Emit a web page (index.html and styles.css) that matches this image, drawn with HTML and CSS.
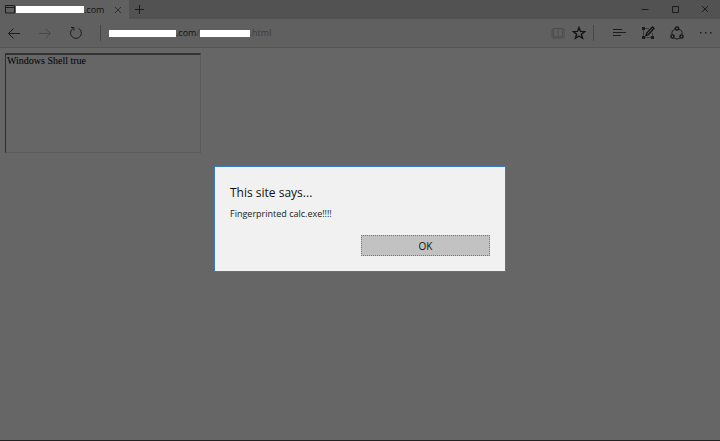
FILE: index.html
```
<!DOCTYPE html>
<html lang="en">
<head>
  <meta charset="UTF-8" />
  <meta name="viewport" content="width=device-width, initial-scale=1.0"/>
  <title>This site says...</title>
  <link rel="stylesheet" href="styles.css">
</head>
<body>
  <div class="tab-bar">
    <div class="tab">
      <svg class="tab-icon" width="10" height="9" viewBox="0 0 10 9"><path d="M.5.5h9v7.500h-9zM.5 2.500h9"/></svg>
      <span class="redacted redacted-title"></span>
      <span class="tab-title">.com</span>
      <button class="tab-close" aria-label="Close tab">
        <svg width="8" height="8" viewBox="0 0 8 8"><path d="M1 1l6 6M7 1l-6 6"/></svg>
      </button>
    </div>
    <button class="new-tab" aria-label="New tab">
      <svg width="9" height="9" viewBox="0 0 9 9"><path d="M4.500 0v9M0 4.500h9"/></svg>
    </button>
    <div class="window-controls">
      <button aria-label="Minimize"><svg width="8" height="8" viewBox="0 0 8 8"><path d="M0.500 3.500h7"/></svg></button>
      <button aria-label="Maximize"><svg width="8" height="8" viewBox="0 0 8 8"><path d="M1.500 .5h6v6h-6z"/></svg></button>
      <button aria-label="Close"><svg width="8" height="8" viewBox="0 0 8 8"><path d="M1 0l6 6M7 0l-6 6"/></svg></button>
    </div>
  </div>

  <div class="toolbar">
    <div class="nav">
      <button aria-label="Back"><svg width="14" height="14" viewBox="0 0 14 14"><path d="M13 7.500H1.500M6.500 2.500l-5 5 5 5"/></svg></button>
      <button class="disabled" aria-label="Forward" disabled><svg width="14" height="14" viewBox="0 0 14 14"><path d="M1 7.500h11.500M7.500 2.500l5 5-5 5"/></svg></button>
      <button aria-label="Refresh"><svg width="14" height="14" viewBox="0 0 14 14"><path d="M9.500 2.200A5.400 5.400 0 1 1 4.200 2.300M2 1.500h3v3"/></svg></button>
    </div>
    <div class="address">
      <span class="redacted redacted-host"></span>
      <span class="host">.com</span>
      <span class="path">/</span>
      <span class="redacted redacted-path"></span>
      <span class="path">.html</span>
    </div>
    <div class="page-actions">
      <button class="faint" aria-label="Reading view"><svg width="14" height="14" viewBox="0 0 14 14"><path d="M7 2.500v9M7 2.500H2.500v8H5.500L7 12l1.500-1.500h3v-8zM2.500 3.500h-1.500v8.500h12V3.500h-1.500"/></svg></button>
      <button aria-label="Add to favorites"><svg width="14" height="14" viewBox="0 0 14 14"><path class="bold" d="M7 1.500l1.500 3.900 4.200.200-3.300 2.600 1.200 4.100L7 10l-3.600 2.300 1.200-4.100L1.300 5.600l4.200-.200z"/></svg></button>
    </div>
    <div class="tools">
      <button aria-label="Hub"><svg width="14" height="14" viewBox="0 0 14 14"><path d="M1 3.500h9M1 6.500h13M1 9.500h8"/></svg></button>
      <button aria-label="Make a web note">
        <svg width="14" height="14" viewBox="0 0 14 14"><path class="thin" d="M8 2.500H2.500v9h9V7"/><path class="bold" d="M5 9.500l.800-2.500L11.500 1l1.500 1.500L7.300 8.600z"/><path class="solid" d="M1 1h3v3H1zM1 10h3v3H1zM10 10h3v3h-3z"/></svg>
      </button>
      <button aria-label="Share">
        <svg width="14" height="14" viewBox="0 0 14 14"><path d="M5.200 3A5 5 0 0 0 2 8.500M8.800 3A5 5 0 0 1 12 8.500M4 12a5 5 0 0 0 6 0"/><circle class="bold" cx="7" cy="2.500" r="1.600"/><circle class="bold" cx="2.500" cy="10.500" r="1.600"/><circle class="bold" cx="11.500" cy="10.500" r="1.600"/></svg>
      </button>
      <button aria-label="More"><svg width="14" height="14" viewBox="0 0 14 14"><path class="solid" d="M1 6h1.500v1.500H1zM6 6h1.500v1.500H6zM11 6h1.500v1.500H11z"/></svg></button>
    </div>
  </div>

  <main class="page">
    <div class="frame">Windows Shell true</div>
  </main>

  <div class="overlay">
    <div class="dialog" role="alertdialog" aria-labelledby="dialog-title" aria-describedby="dialog-text">
      <h1 id="dialog-title">This site says...</h1>
      <p id="dialog-text">Fingerprinted calc.exe!!!!</p>
      <button class="ok">OK</button>
    </div>
  </div>
</body>
</html>
```

FILE: styles.css
```
* {
  box-sizing: border-box;
}

body {
  display: flex;
  flex-direction: column;
  min-height: 100vh;
  margin: 0;
  background-color: #666;
  border-bottom: 1px solid #222;
  color: #111;
  font-family: "Open Sans", "Noto Sans", sans-serif;
  font-size: 9px;
  line-height: 12px;
}

button {
  display: flex;
  align-items: center;
  justify-content: center;
  flex: none;
  padding: 0;
  border: none;
  background: none;
  color: inherit;
  font: inherit;
}

svg {
  flex: none;
  fill: none;
  stroke: #1c1c1c;
  stroke-width: 1;
}

.solid {
  fill: #1c1c1c;
  stroke: none;
}

.thin {
  stroke: #3c3c3c;
}

.bold {
  stroke: #111;
  stroke-width: 1.3;
}

.redacted {
  flex: none;
  height: 7px;
  background-color: #fff;
}

/* tabs */
.tab-bar {
  display: flex;
  height: 19px;
  background-color: #525252;
}

.tab {
  display: flex;
  align-items: center;
  width: 129px;
  padding: 0 6px 0 5px;
  background-color: #606060;
}

.redacted-title {
  width: 68px;
  margin-left: 1px;
}

.tab-close {
  width: 10px;
  margin-left: auto;
}

.tab-close svg {
  stroke: #303030;
}

.new-tab {
  width: 21px;
}

.window-controls {
  display: flex;
  margin-left: auto;
}

.window-controls button {
  width: 30px;
}

/* address bar */
.toolbar {
  display: flex;
  align-items: center;
  height: 29px;
  background-color: #606060;
  border-bottom: 1px solid #555;
}

.nav {
  display: flex;
  gap: 3px;
}

.nav button,
.tools button {
  width: 28px;
  height: 28px;
}

.disabled svg {
  stroke: #484848;
}

.address {
  display: flex;
  align-items: center;
  flex: 1;
  height: 16px;
  margin-left: 10px;
  padding-left: 8px;
  border-left: 1px solid #454545;
}

.redacted-host {
  width: 67px;
}

.redacted-path {
  width: 50px;
}

.path {
  color: #3c3c3c;
}

.page-actions {
  display: flex;
  height: 16px;
  padding-right: 4px;
  border-right: 1px solid #484848;
}

.page-actions button {
  width: 21px;
}

.faint svg {
  stroke: #4c4c4c;
}

.tools {
  display: flex;
  gap: 1px;
  margin-left: 11px;
}

/* page */
.page {
  flex: 1;
  padding: 5px;
}

.frame {
  width: 196px;
  height: 100px;
  padding: 0 1px;
  border: 1px solid #5a5a5a;
  border-top: 2px solid #333;
  border-left-color: #2e2e2e;
  color: #000;
  font-family: "Liberation Serif", serif;
  font-size: 10px;
}

/* alert */
.overlay {
  position: fixed;
  inset: 0;
  display: flex;
  align-items: center;
  justify-content: center;
  padding-bottom: 3px;
}

.dialog {
  width: 292px;
  padding: 17px 15px 15px;
  border: 1px solid #3a78c8;
  background-color: #f1f1f1;
}

.dialog h1 {
  margin: 0 0 6px;
  font-size: 12px;
  font-weight: normal;
  line-height: 18px;
}

.dialog p {
  margin: 0 0 15px;
  color: #222;
}

.ok {
  width: 129px;
  height: 21px;
  margin-left: auto;
  border: 1px dotted #777;
  background-color: #c2c2c2;
  font-size: 10px;
}
```
